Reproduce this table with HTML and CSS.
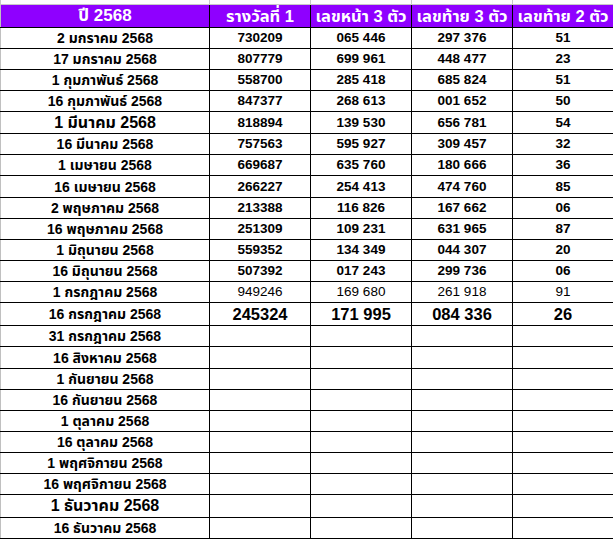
FILE: index.html
```html
<!DOCTYPE html>
<html lang="th">
<head>
<meta charset="utf-8">
<title>ผลสลาก 2568</title>
<link rel="stylesheet" href="styles.css">
</head>
<body>
<div class="sheet">
<table class="lotto">
<colgroup>
<col class="c-date"><col class="c-num"><col class="c-num"><col class="c-num"><col class="c-num">
</colgroup>
<tbody>
<tr class="top"><td></td><td></td><td></td><td></td><td></td></tr>
<tr class="head">
<th class="year">ปี 2568</th><th>รางวัลที่ 1</th><th>เลขหน้า 3 ตัว</th><th>เลขท้าย 3 ตัว</th><th>เลขท้าย 2 ตัว</th>
</tr>
<tr><td class="date">2 มกราคม 2568</td><td>730209</td><td>065 446</td><td>297 376</td><td>51</td></tr>
<tr><td class="date">17 มกราคม 2568</td><td>807779</td><td>699 961</td><td>448 477</td><td>23</td></tr>
<tr><td class="date">1 กุมภาพันธ์ 2568</td><td>558700</td><td>285 418</td><td>685 824</td><td>51</td></tr>
<tr><td class="date">16 กุมภาพันธ์ 2568</td><td>847377</td><td>268 613</td><td>001 652</td><td>50</td></tr>
<tr class="tall"><td class="date big">1 มีนาคม 2568</td><td>818894</td><td>139 530</td><td>656 781</td><td>54</td></tr>
<tr><td class="date">16 มีนาคม 2568</td><td>757563</td><td>595 927</td><td>309 457</td><td>32</td></tr>
<tr><td class="date">1 เมษายน 2568</td><td>669687</td><td>635 760</td><td>180 666</td><td>36</td></tr>
<tr class="tall"><td class="date">16 เมษายน 2568</td><td>266227</td><td>254 413</td><td>474 760</td><td>85</td></tr>
<tr><td class="date">2 พฤษภาคม 2568</td><td>213388</td><td>116 826</td><td>167 662</td><td>06</td></tr>
<tr><td class="date">16 พฤษภาคม 2568</td><td>251309</td><td>109 231</td><td>631 965</td><td>87</td></tr>
<tr><td class="date">1 มิถุนายน 2568</td><td>559352</td><td>134 349</td><td>044 307</td><td>20</td></tr>
<tr><td class="date">16 มิถุนายน 2568</td><td>507392</td><td>017 243</td><td>299 736</td><td>06</td></tr>
<tr class="plain"><td class="date">1 กรกฎาคม 2568</td><td>949246</td><td>169 680</td><td>261 918</td><td>91</td></tr>
<tr class="taller latest"><td class="date">16 กรกฎาคม 2568</td><td>245324</td><td>171 995</td><td>084 336</td><td>26</td></tr>
<tr><td class="date">31 กรกฎาคม 2568</td><td></td><td></td><td></td><td></td></tr>
<tr class="tall"><td class="date">16 สิงหาคม 2568</td><td></td><td></td><td></td><td></td></tr>
<tr><td class="date">1 กันยายน 2568</td><td></td><td></td><td></td><td></td></tr>
<tr><td class="date">16 กันยายน 2568</td><td></td><td></td><td></td><td></td></tr>
<tr><td class="date">1 ตุลาคม 2568</td><td></td><td></td><td></td><td></td></tr>
<tr><td class="date">16 ตุลาคม 2568</td><td></td><td></td><td></td><td></td></tr>
<tr><td class="date">1 พฤศจิกายน 2568</td><td></td><td></td><td></td><td></td></tr>
<tr><td class="date">16 พฤศจิกายน 2568</td><td></td><td></td><td></td><td></td></tr>
<tr class="taller"><td class="date big">1 ธันวาคม 2568</td><td></td><td></td><td></td><td></td></tr>
<tr><td class="date">16 ธันวาคม 2568</td><td></td><td></td><td></td><td></td></tr>
</tbody>
</table>
</div>
</body>
</html>
```
FILE: styles.css
```css
html, body {
  margin: 0;
  padding: 0;
  background: #ffffff;
}
.sheet {
  width: 613px;
  height: 541px;
  overflow: hidden;
}
.lotto {
  border-collapse: collapse;
  table-layout: fixed;
  width: 614px;
  font-family: "Liberation Sans", "Noto Sans Thai", "Loma", "Garuda", sans-serif;
  font-weight: bold;
  color: #000;
}
.c-date { width: 209px; }
.c-num { width: 101px; }
.lotto td, .lotto th {
  border: 1px solid #000;
  padding: 0;
  height: 20px;
  text-align: center;
  vertical-align: middle;
  font-size: 13.5px;
  line-height: 16px;
  white-space: nowrap;
  overflow: hidden;
}
.lotto td.date {
  font-size: 14px;
}
.lotto td:first-child, .lotto th:first-child {
  border-left-color: #c0c0c0;
}
.lotto .top td {
  height: 4px;
  border: 1px solid #c8c8c8;
  border-top: none;
}
.lotto .head th {
  background: #8f00ff;
  color: #fff;
  height: 22px;
  font-size: 16.5px;
  border-top-color: #c8c8c8;
}
.lotto .head th.year {
  font-size: 17px;
}
.lotto .tall td { height: 21px; }
.lotto .taller td { height: 22px; }
.lotto td.big { font-size: 16px; }
.lotto .plain td:not(.date) { font-weight: normal; }
.lotto .latest td:not(.date) { font-size: 16.5px; }
```
